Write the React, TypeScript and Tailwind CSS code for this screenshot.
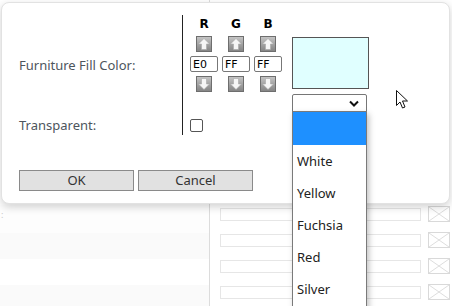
import React from 'react';

const ArrowBtn: React.FC<{ dir: 'up' | 'down' }> = ({ dir }) => (
    <div className="w-4 h-4 border border-[#6e6e6e] bg-gradient-to-b from-[#c4c4c4] to-[#858585] flex items-center justify-center">
        <svg width="14" height="14" viewBox="0 0 14 14">
            {dir === 'up' ? (
                <path d="M7 1.5 L12.5 7 L9.5 7 L9.5 12.5 L4.5 12.5 L4.5 7 L1.5 7 Z" fill="#f6f6f6" stroke="#a8a8a8" strokeWidth="0.6" />
            ) : (
                <path d="M7 12.5 L12.5 7 L9.5 7 L9.5 1.5 L4.5 1.5 L4.5 7 L1.5 7 Z" fill="#f6f6f6" stroke="#a8a8a8" strokeWidth="0.6" />
            )}
        </svg>
    </div>
);

const channels = [
    { name: 'R', value: 'E0' },
    { name: 'G', value: 'FF' },
    { name: 'B', value: 'FF' },
];

const options = ['White', 'Yellow', 'Fuchsia', 'Red', 'Silver'];

export default function App() {
    return (
        <div className="w-[452px] h-[306px] relative overflow-hidden bg-white font-['Noto_Sans',sans-serif]">
            {/* Page behind the dialog */}
            <div className="flex flex-col h-full">
                <div className="h-[2px] bg-[#d4d4d4] flex">
                    <div className="w-[215px]" />
                    <div className="w-[18px] bg-[#b9cbe6]" />
                </div>
                <div className="flex flex-1">
                    <div className="w-[209px] flex flex-col pt-[205px]">
                        <div className="h-[28px] bg-[#fdfdfd] pl-[1px] text-[9px] text-[#c8c8c8] leading-[20px]">:</div>
                        <div className="h-[26px] bg-[#fafafa]" />
                        <div className="h-[26px] bg-white" />
                        <div className="h-[26px] bg-[#fafafa]" />
                    </div>
                    <div className="flex-1 border-l border-[#dcdcdc] pl-[10px] pt-[206px] flex flex-col gap-[10px]">
                        {[0, 1, 2, 3].map((i) => (
                            <div key={i} className="flex items-center gap-[7px] h-[16px]">
                                <div className="w-[201px] h-[13px] border border-[#e6e6e6] bg-white" />
                                <svg width="22" height="16" viewBox="0 0 22 16" className="shrink-0">
                                    <rect x="0.5" y="0.5" width="21" height="15" fill="white" stroke="#d9d9d9" />
                                    <path d="M1 1 L21 15 M21 1 L1 15" stroke="#dedede" strokeWidth="1" />
                                </svg>
                            </div>
                        ))}
                    </div>
                </div>
            </div>

            {/* Dialog */}
            <div className="absolute left-[1px] top-[2px] w-[449px] h-[202px] bg-white rounded-lg border border-[#e2e2e2] shadow-[0_3px_8px_rgba(0,0,0,0.18)] flex flex-col">
                <div className="flex pt-[12px]">
                    <div className="w-[180px] pl-[17px] flex flex-col text-[13px] text-[#4d555d]">
                        <div className="h-[98px] flex items-center pt-[4px]">Furniture Fill Color:</div>
                        <div className="h-[24px] flex items-center pt-[1px]">Transparent:</div>
                    </div>
                    <div className="border-l border-[#222] h-[120px] pl-[7px] flex flex-col">
                        <div className="flex">
                            <div className="flex gap-[4px]">
                                {channels.map((c) => (
                                    <div key={c.name} className="w-[28px] flex flex-col items-center">
                                        <div className="h-[19px] pt-[1px] text-[12px] font-bold text-black leading-[16px] font-['DejaVu_Sans',sans-serif]">{c.name}</div>
                                        <div className="mt-[2px]"><ArrowBtn dir="up" /></div>
                                        <input
                                            readOnly
                                            value={c.value}
                                            className="mt-[4px] w-[28px] h-[16px] border border-[#777] rounded-[2px] px-[2px] text-[11px] leading-[14px] text-black font-['DejaVu_Sans',sans-serif] outline-none"
                                        />
                                        <div className="mt-[4px]"><ArrowBtn dir="down" /></div>
                                    </div>
                                ))}
                            </div>
                            <div className="ml-[10px] pt-[22px] flex flex-col gap-[5px]">
                                <div className="w-[77px] h-[52px] bg-[#e0ffff] border border-[#555]" />
                                <div className="w-[75px] h-[19px] border border-[#767676] rounded-t-[2px] bg-white flex items-center justify-end pr-[7px]">
                                    <svg width="10" height="7" viewBox="0 0 10 7">
                                        <path d="M1 1.5 L5 5.5 L9 1.5" fill="none" stroke="#111" strokeWidth="2" />
                                    </svg>
                                </div>
                            </div>
                        </div>
                        <div className="mt-[6px] w-[13px] h-[13px] border border-[#555] rounded-[2px] bg-white" />
                    </div>
                </div>
                <div className="flex gap-[4px] pl-[17px] mt-[33px]">
                    <button className="w-[115px] h-[21px] bg-[#e1e1e1] border border-[#8a8a8a] text-[13px] text-[#333] leading-[19px]">OK</button>
                    <button className="w-[115px] h-[21px] bg-[#e1e1e1] border border-[#8a8a8a] text-[13px] text-[#333] leading-[19px]">Cancel</button>
                </div>
            </div>

            {/* Open select list */}
            <div className="absolute left-[292px] top-[111px] w-[75px] h-[200px] bg-white border border-[#7a7a7a] shadow-[2px_3px_6px_rgba(0,0,0,0.25)] flex flex-col">
                <div className="h-[33px] bg-[#1e90ff]" />
                {options.map((o) => (
                    <div key={o} className="h-[32px] pl-[4px] pt-[2px] flex items-center text-[13px] text-[#222]">{o}</div>
                ))}
            </div>

            {/* Mouse cursor */}
            <svg className="absolute left-[396px] top-[90px]" width="13" height="20" viewBox="0 0 13 20">
                <path d="M0.5 0.5 L0.5 15.5 L4 12 L6.5 18 L9 17 L6.5 11 L11.5 11 Z" fill="white" stroke="#111" strokeWidth="1" />
            </svg>
        </div>
    );
}
